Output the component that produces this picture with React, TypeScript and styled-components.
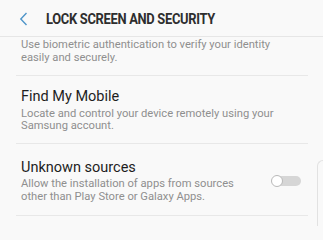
import styled, { createGlobalStyle } from "styled-components";
import { FC } from "react";

const GlobalStyle = createGlobalStyle`
    html, body {
        margin: 0;
        padding: 0;
        background: #f9f9f9;
    }
    * {
        box-sizing: border-box;
    }
`;

const App: FC = () => {
    return (
        <>
            <GlobalStyle />
            <Screen>
                <Header>
                    <BackButton>
                        <svg width="9" height="14" viewBox="0 0 9 14">
                            <path d="M7.5 1 L1.8 7 L7.5 13" fill="none" stroke="#4f95c9" strokeWidth="1.4" />
                        </svg>
                    </BackButton>
                    <Title>LOCK SCREEN AND SECURITY</Title>
                </Header>
                <List>
                    <Item $top={2} $bottom={11}>
                        <ItemText>
                            <Description>
                                Use biometric authentication to verify your identity
                                <br />
                                easily and securely.
                            </Description>
                        </ItemText>
                    </Item>
                    <Item $top={12} $bottom={10.5}>
                        <ItemText>
                            <ItemTitle>Find My Mobile</ItemTitle>
                            <Description>
                                Locate and control your device remotely using your
                                <br />
                                Samsung account.
                            </Description>
                        </ItemText>
                    </Item>
                    <Item $top={14.5} $bottom={12}>
                        <ItemText>
                            <ItemTitle>Unknown sources</ItemTitle>
                            <Description>
                                Allow the installation of apps from sources
                                <br />
                                other than Play Store or Galaxy Apps.
                            </Description>
                        </ItemText>
                        <Switch>
                            <Knob />
                        </Switch>
                    </Item>
                </List>
                <PeekPanel />
            </Screen>
        </>
    );
};

const Screen = styled.div`
    position: relative;
    width: 323px;
    height: 226px;
    overflow: hidden;
    background: #f9f9f9;
    font-family: Roboto, "Liberation Sans", sans-serif;
`;

const Header = styled.div`
    height: 37px;
    display: flex;
    align-items: center;
    padding-left: 19px;
    border-bottom: 1px solid #e6e6e6;
`;

const BackButton = styled.div`
    width: 9px;
    height: 14px;
    display: flex;
    margin-right: 18px;
    margin-top: 1px;
`;

const Title = styled.div`
    font-size: 15px;
    font-weight: 700;
    color: #2e2e2e;
    letter-spacing: -0.35px;
    transform: scaleX(0.86);
    transform-origin: left center;
    white-space: nowrap;
    margin-top: 1px;
`;

const List = styled.div`
    display: flex;
    flex-direction: column;
    padding: 0 15px 0 16px;
`;

const Item = styled.div<{ $top: number; $bottom: number }>`
    display: flex;
    align-items: center;
    padding: ${(p) => p.$top}px 7px ${(p) => p.$bottom}px 5px;
    border-bottom: 1px solid #e8e8e8;
`;

const ItemText = styled.div`
    flex: 1;
    display: flex;
    flex-direction: column;
    gap: 2.5px;
`;

const ItemTitle = styled.div`
    font-size: 14.5px;
    line-height: 17px;
    color: #1e1e1e;
`;

const Description = styled.div`
    font-size: 11.2px;
    line-height: 12.5px;
    color: #8f8f8f;
    white-space: nowrap;
`;

const Switch = styled.div`
    position: relative;
    width: 28px;
    height: 10px;
    border-radius: 5px;
    background: #d6d6d6;
`;

const Knob = styled.div`
    position: absolute;
    left: -2px;
    top: -1px;
    width: 12px;
    height: 12px;
    border-radius: 50%;
    background: #ffffff;
    border: 1px solid #b9b9b9;
`;

const PeekPanel = styled.div`
    position: absolute;
    left: 317px;
    top: 160px;
    width: 20px;
    height: 80px;
    border-left: 1px solid #e2e2e2;
    border-top: 1px solid #e2e2e2;
    border-top-left-radius: 6px;
`;

export default App;
